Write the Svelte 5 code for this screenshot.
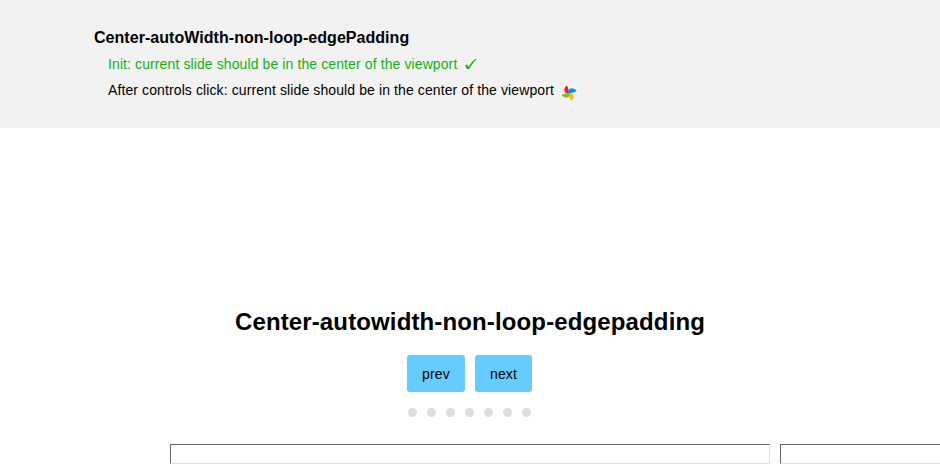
<script>
  const dots = Array.from({ length: 7 }, (_, i) => i);
</script>

<div class="page">
  <header>
    <h1>Center-autoWidth-non-loop-edgePadding</h1>
    <p class="pass"><span>Init: current slide should be in the center of the viewport</span>
      <svg class="check" width="12" height="12" viewBox="0 0 12 12"><path d="M0 7 L2 6.700 L3.500 9 C5 6.300 7.500 3.200 10.300 1 H11.700 C8.500 4 6.500 7 4 11 H2 Z" fill="#0fb40f" /></svg>
    </p>
    <p><span>After controls click: current slide should be in the center of the viewport</span>
      <svg class="wheel" width="16" height="16" viewBox="0 0 16 16">
        <path d="M8 9 L5 8 C2.600 5.800 2.800 3 5.700 0.500 C7 2 7.600 4 8 9Z" fill="#e5202b" />
        <path d="M7.300 8 L7.200 5.500 C9.500 2.300 12.800 2.800 15.700 6 C13.500 7.500 10.500 8 7.300 8Z" fill="#0d8ee0" />
        <path d="M7.500 8 L10.500 8 C13.800 10.500 13.200 13.300 10.500 15.800 C8.500 14.200 8 11 7.500 8Z" fill="#ffbb12" />
        <path d="M8 8 L8.700 10.700 C6.500 13.700 3.500 13 0.400 10.300 C2.500 8.700 5 8 8 8Z" fill="#80c024" />
      </svg>
    </p>
  </header>
  <h2>Center-autowidth-non-loop-edgepadding</h2>
  <div class="controls"><button>prev</button><button>next</button></div>
  <div class="dots">{#each dots as dot (dot)}<span></span>{/each}</div>
  <div class="slider"><div class="slide"></div><div class="slide"></div></div>
</div>

<style>
  .page { height: 467px; overflow: hidden; background: #fff; color: #000; font-family: "Liberation Sans", Arial, sans-serif; }
  header { box-sizing: border-box; height: 128px; padding: 28px 94px 0; background: #f2f2f2; }
  h1 { margin: 0; font-size: 16px; line-height: 20px; letter-spacing: 0.045px; }
  p { display: flex; margin: 0 0 0 14px; font-size: 14px; line-height: 26px; height: 26px; letter-spacing: 0.105px; }
  h1 + p { margin-top: 3px; }
  .pass { color: #0fb40f; }
  .check { margin: 7px 0 0 8px; }
  .wheel { margin: 8px 0 0 7px; }
  h2 { margin: 180px 0 0; font-size: 24px; line-height: 28px; text-align: center; letter-spacing: 0.13px; }
  .controls { display: flex; justify-content: center; gap: 10px; margin-top: 19px; padding-right: 1px; }
  button { box-sizing: border-box; width: 57px; height: 37px; padding: 0; border: 0; border-radius: 3px; background: #6cf; color: #000; font: 14px "Liberation Sans", Arial, sans-serif; letter-spacing: 0.15px; }
  button:first-child { width: 58px; }
  .dots { display: flex; justify-content: center; gap: 10px; margin-top: 16px; padding-right: 1px; }
  .dots span { width: 9px; height: 9px; border-radius: 50%; background: #ddd; }
  .slider { display: flex; gap: 10px; margin: 27px 0 0 170px; }
  .slide { box-sizing: border-box; flex: 0 0 600px; height: 20px; border: 1px solid; border-color: #666 #e0e0e0 #e0e0e0 #666; }
</style>
